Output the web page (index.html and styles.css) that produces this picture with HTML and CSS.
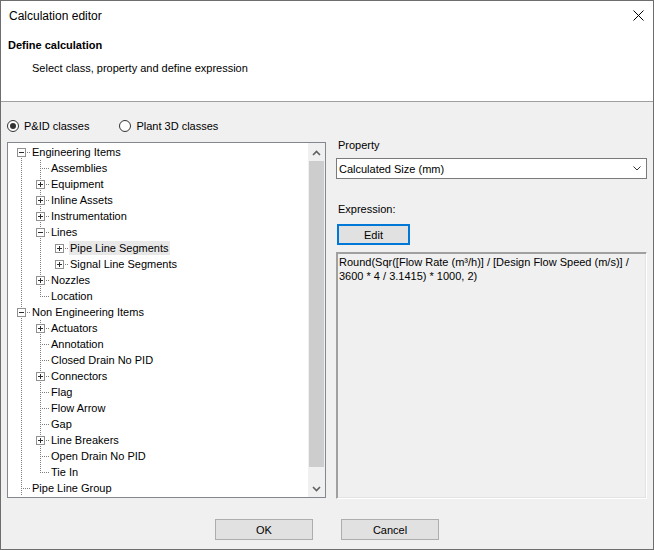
FILE: index.html
```html
<!DOCTYPE html>
<html>
<head>
<meta charset="utf-8">
<title>Calculation editor</title>
<link rel="stylesheet" href="styles.css">
</head>
<body>
<div class="window">
  <div class="titlebar">
    <span class="title">Calculation editor</span>
    <svg class="close" width="11" height="11" viewBox="0 0 11 11"><path d="M0.5 0.5 L10.5 10.5 M10.5 0.5 L0.5 10.5" stroke="#000" stroke-width="1" fill="none"/></svg>
  </div>
  <div class="header">
    <div class="h-title">Define calculation</div>
    <div class="h-sub">Select class, property and define expression</div>
  </div>
  <div class="content">
    <div class="main">
      <div class="left">
        <div class="radios">
          <label class="radio"><span class="dot on"></span>P&amp;ID classes</label>
          <label class="radio"><span class="dot"></span>Plant 3D classes</label>
        </div>
        <div class="treebox">
          <div class="tree">
            <div class="row"><span class="cell f"><span class="exp minus"></span></span><span class="txt">Engineering Items</span></div>
            <div class="row"><span class="cell i"></span><span class="cell t"></span><span class="txt">Assemblies</span></div>
            <div class="row"><span class="cell i"></span><span class="cell t"><span class="exp plus"></span></span><span class="txt">Equipment</span></div>
            <div class="row"><span class="cell i"></span><span class="cell t"><span class="exp plus"></span></span><span class="txt">Inline Assets</span></div>
            <div class="row"><span class="cell i"></span><span class="cell t"><span class="exp plus"></span></span><span class="txt">Instrumentation</span></div>
            <div class="row"><span class="cell i"></span><span class="cell t"><span class="exp minus"></span></span><span class="txt">Lines</span></div>
            <div class="row"><span class="cell i"></span><span class="cell i"></span><span class="cell h"><span class="exp plus"></span></span><span class="txt sel">Pipe Line Segments</span></div>
            <div class="row"><span class="cell i"></span><span class="cell i"></span><span class="cell h"><span class="exp plus"></span></span><span class="txt">Signal Line Segments</span></div>
            <div class="row"><span class="cell i"></span><span class="cell t"><span class="exp plus"></span></span><span class="txt">Nozzles</span></div>
            <div class="row"><span class="cell i"></span><span class="cell l"></span><span class="txt">Location</span></div>
            <div class="row"><span class="cell t"><span class="exp minus"></span></span><span class="txt">Non Engineering Items</span></div>
            <div class="row"><span class="cell i"></span><span class="cell t"><span class="exp plus"></span></span><span class="txt">Actuators</span></div>
            <div class="row"><span class="cell i"></span><span class="cell t"></span><span class="txt">Annotation</span></div>
            <div class="row"><span class="cell i"></span><span class="cell t"></span><span class="txt">Closed Drain No PID</span></div>
            <div class="row"><span class="cell i"></span><span class="cell t"><span class="exp plus"></span></span><span class="txt">Connectors</span></div>
            <div class="row"><span class="cell i"></span><span class="cell t"></span><span class="txt">Flag</span></div>
            <div class="row"><span class="cell i"></span><span class="cell t"></span><span class="txt">Flow Arrow</span></div>
            <div class="row"><span class="cell i"></span><span class="cell t"></span><span class="txt">Gap</span></div>
            <div class="row"><span class="cell i"></span><span class="cell t"><span class="exp plus"></span></span><span class="txt">Line Breakers</span></div>
            <div class="row"><span class="cell i"></span><span class="cell t"></span><span class="txt">Open Drain No PID</span></div>
            <div class="row"><span class="cell i"></span><span class="cell l"></span><span class="txt">Tie In</span></div>
            <div class="row"><span class="cell t"></span><span class="txt">Pipe Line Group</span></div>
          </div>
          <div class="vscroll">
            <div class="arrow up"><svg width="9" height="6" viewBox="0 0 9 6"><path d="M1 5 L4.5 1.5 L8 5" stroke="#606060" stroke-width="1.6" fill="none"/></svg></div>
            <div class="thumb"></div>
            <div class="track-rest"></div>
            <div class="arrow down"><svg width="9" height="6" viewBox="0 0 9 6"><path d="M1 1 L4.5 4.5 L8 1" stroke="#606060" stroke-width="1.6" fill="none"/></svg></div>
          </div>
        </div>
      </div>
      <div class="right">
        <div class="lbl">Property</div>
        <div class="combo">
          <span>Calculated Size (mm)</span>
          <svg width="8" height="5" viewBox="0 0 8 5"><path d="M0.5 0.5 L4 4 L7.5 0.5" stroke="#333" stroke-width="1" fill="none"/></svg>
        </div>
        <div class="lbl expr-lbl">Expression:</div>
        <button class="btn edit">Edit</button>
        <div class="exprbox">Round(Sqr([Flow Rate (m³/h)] / [Design Flow Speed (m/s)] /<br>3600 * 4 / 3.1415) * 1000, 2)</div>
      </div>
    </div>
    <div class="buttons">
      <button class="btn">OK</button>
      <button class="btn">Cancel</button>
    </div>
  </div>
</div>
</body>
</html>
```
FILE: styles.css
```css
* { box-sizing: border-box; }
html, body { margin: 0; padding: 0; }
body {
  font-family: "Segoe UI", "Liberation Sans", Arial, sans-serif;
  font-size: 11px;
  color: #000;
  background: #fff;
  --dv: repeating-linear-gradient(to bottom, #7f7f7f 0 1px, transparent 1px 2px);
  --dh: repeating-linear-gradient(to right, #7f7f7f 0 1px, transparent 1px 2px);
}
.window {
  width: 654px;
  height: 550px;
  border: 1px solid #6e6e6e;
  background: #f0f0f0;
  display: flex;
  flex-direction: column;
}
.titlebar {
  height: 30px;
  background: #fff;
  display: flex;
  align-items: center;
  justify-content: space-between;
  padding: 0 9px 0 8px;
  font-size: 12px;
}
.close { margin-bottom: 2px; }
.header {
  background: #fff;
  border-bottom: 1px solid #a0a0a0;
  padding: 7px 7px 26px;
  line-height: 14px;
}
.h-title { font-weight: bold; }
.h-sub { margin-top: 9px; padding-left: 24px; }

.content {
  flex: 1;
  padding: 16px 6px 0;
  display: flex;
  flex-direction: column;
}
.main { display: flex; gap: 10px; }
.left { width: 319px; display: flex; flex-direction: column; gap: 8px; }
.radios { display: flex; gap: 30px; height: 16px; align-items: center; line-height: 14px; }
.radio { display: flex; align-items: center; gap: 5px; }
.dot {
  width: 12px; height: 12px;
  border: 1px solid #333;
  border-radius: 50%;
  background: #fff;
  display: flex; align-items: center; justify-content: center;
}
.dot.on::after {
  content: "";
  width: 6px; height: 6px;
  border-radius: 50%;
  background: #333;
}
.treebox {
  height: 356px;
  border: 1px solid #828790;
  background: #fff;
  display: flex;
}
.tree { flex: 1; padding: 1px 0 0 4px; overflow: hidden; }
.row { display: flex; height: 16px; align-items: center; }
.cell { width: 19px; height: 16px; flex: none; display: block; }
.txt { padding: 0 2px 0 1px; line-height: 14px; white-space: nowrap; }
.sel { background: #e8e8e8; }
.i { background: var(--dv) 9px 0 / 1px 16px no-repeat; }
.t { background: var(--dv) 9px 0 / 1px 16px no-repeat, var(--dh) 11px 8px / 8px 1px no-repeat; }
.l { background: var(--dv) 9px 0 / 1px 9px no-repeat, var(--dh) 11px 8px / 8px 1px no-repeat; }
.f { background: var(--dv) 9px 8px / 1px 8px no-repeat, var(--dh) 11px 8px / 8px 1px no-repeat; }
.h { background: var(--dh) 11px 8px / 8px 1px no-repeat; }
.exp {
  display: block;
  width: 9px; height: 9px;
  margin: 4px 0 0 5px;
  border: 1px solid #919191;
}
.exp.minus { background: linear-gradient(#2b2b2b, #2b2b2b) center / 5px 1px no-repeat, #fff; }
.exp.plus {
  background: linear-gradient(#2b2b2b, #2b2b2b) center / 5px 1px no-repeat,
              linear-gradient(#2b2b2b, #2b2b2b) center / 1px 5px no-repeat, #fff;
}
.vscroll { width: 17px; background: #f0f0f0; display: flex; flex-direction: column; }
.arrow { height: 17px; display: flex; justify-content: center; align-items: center; flex: none; }
.arrow.up svg { margin-top: 2px; }
.thumb { height: 306px; margin: 1px 1px 0; background: #cdcdcd; flex: none; }
.track-rest { flex: 1; }

.right {
  width: 311px;
  display: flex;
  flex-direction: column;
  align-items: flex-start;
  padding-top: 20px;
  line-height: 14px;
}
.lbl { padding-left: 2px; }
.combo {
  margin-top: 6px;
  width: 311px; height: 21px;
  border: 1px solid #7a7a7a;
  background: #fff;
  display: flex; align-items: center; justify-content: space-between;
  padding: 0 5px 0 2px;
}
.expr-lbl { margin-top: 23px; }
.btn {
  width: 98px; height: 21px;
  border: 1px solid #adadad;
  background: #e1e1e1;
  font: inherit;
  color: #000;
  padding: 0;
}
.edit {
  margin-top: 8px; margin-left: 1px;
  width: 73px;
  border: 2px solid #0078d7;
}
.exprbox {
  margin-top: 7px;
  width: 311px; height: 247px;
  border: 1px solid;
  border-color: #a0a0a0 #fff #fff #a0a0a0;
  box-shadow: inset 1px 1px #a0a0a0, inset -1px -1px #e3e3e3;
  padding: 2px 2px;
  white-space: nowrap;
}
.buttons { display: flex; justify-content: center; gap: 28px; margin-top: 20px; }
```
